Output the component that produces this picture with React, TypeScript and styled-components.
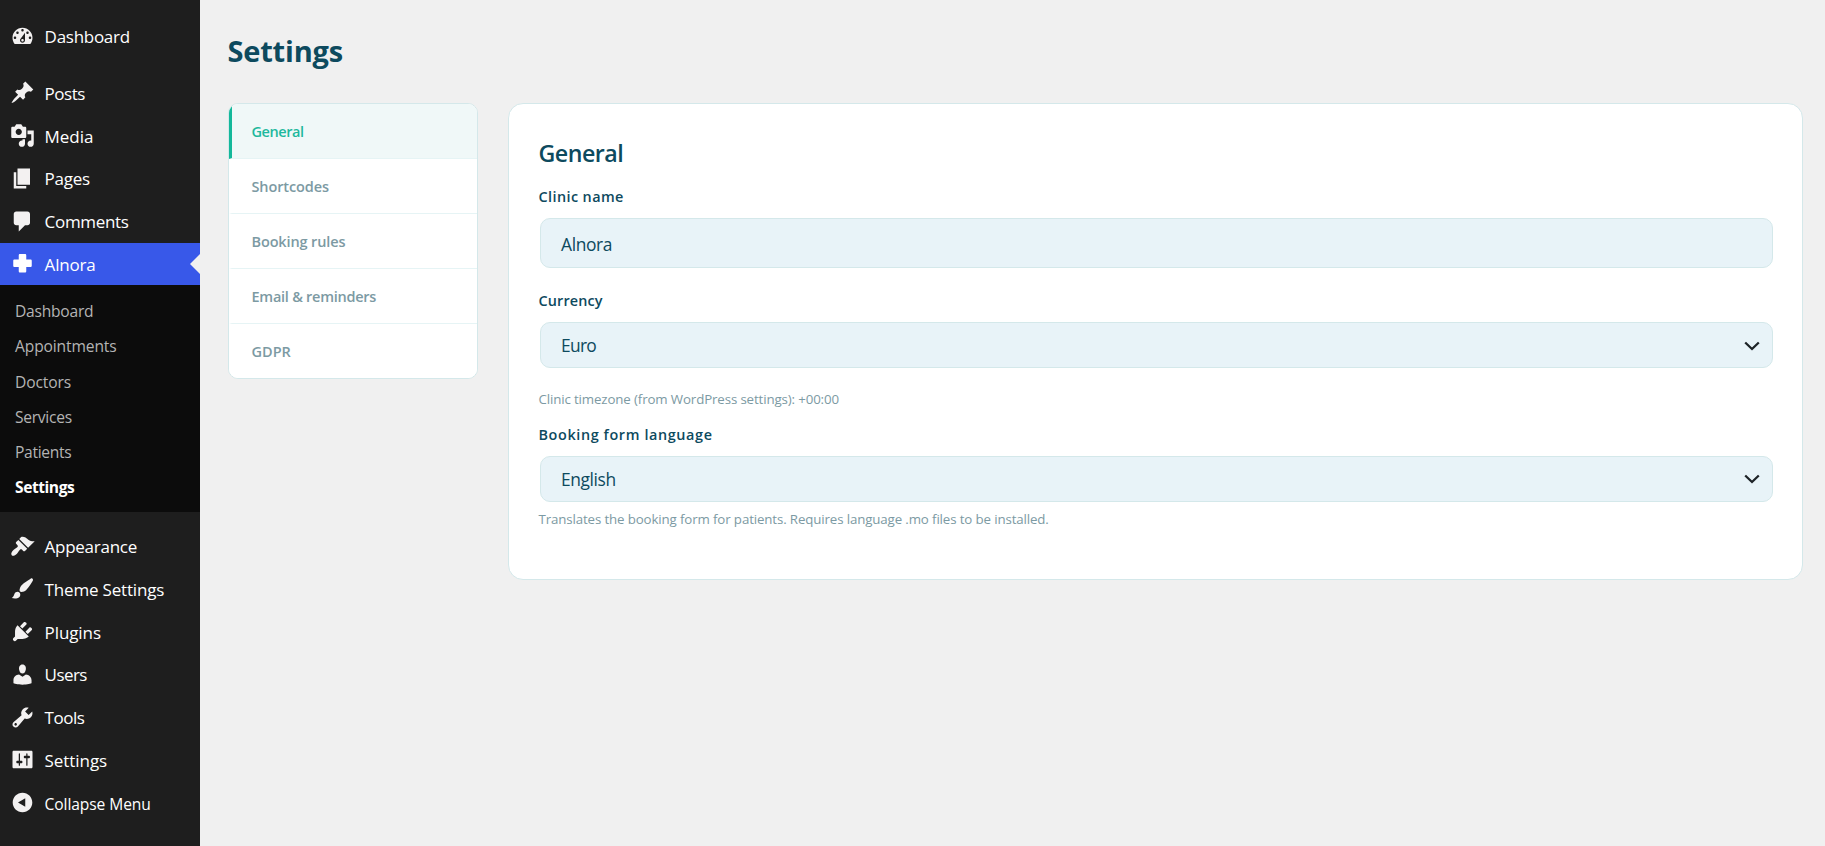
import React from 'react';
import styled, { createGlobalStyle, css } from 'styled-components';

const GlobalStyle = createGlobalStyle`
  *, *::before, *::after { box-sizing: border-box; }
  html, body { margin: 0; padding: 0; background: #f0f0f0; overflow: hidden; }
  body { font-family: "Segoe UI", "Open Sans", "Noto Sans", sans-serif; }
`;

const Shell = styled.div`
  display: flex;
  width: 100%;
  height: 846px;
`;

/* ---------- admin sidebar ---------- */

const Sidebar = styled.nav`
  flex: none;
  width: 200px;
  padding-top: 15px;
  background: #1e1e1e;
  overflow: hidden;
`;

const MenuGroup = styled.ul`
  list-style: none;
  margin: 0;
  padding: 0;

  & + & { margin-top: 13.75px; }
`;

const MenuLink = styled.a<{ $active?: boolean; $small?: boolean }>`
  position: relative;
  display: flex;
  align-items: center;
  gap: 9.6px;
  height: 42.75px;
  padding-left: 10px;
  color: #fff;
  font-size: ${(p) => (p.$small ? 15.6 : 17)}px;
  white-space: nowrap;

  ${(p) => p.$active && css`
    background: #3858e9;

    &::after {
      content: "";
      position: absolute;
      right: 0;
      top: 11px;
      border: 10px solid transparent;
      border-left-width: 0;
      border-right-color: #f0f0f0;
    }
  `}
`;

const MenuText = styled.span<{ $tracking: number }>`
  padding-top: 2px;
  line-height: 24px;
  letter-spacing: ${(p) => p.$tracking}px;
`;

const MenuIcon = styled.svg<{ $active?: boolean }>`
  flex: none;
  width: 25px;
  height: 25px;
  fill: ${(p) => (p.$active ? '#fff' : '#f3f1f1')};
`;

const SubMenu = styled.ul`
  list-style: none;
  margin: 0 0 12.9px;
  padding: 9px 0 6.6px;
  background: #0c0c0c;
`;

const SubLink = styled.li<{ $current?: boolean; $tracking: number }>`
  height: 35.2px;
  padding-left: 15px;
  color: ${(p) => (p.$current ? '#fff' : '#b4b4b4')};
  font-size: 15.6px;
  font-weight: ${(p) => (p.$current ? 700 : 400)};
  line-height: 35.2px;
  letter-spacing: ${(p) => p.$tracking}px;
`;

/* ---------- settings page ---------- */

const Page = styled.main`
  flex: 1;
  min-width: 0;
  padding: 30px 22px 0 28px;
`;

const PageTitle = styled.h1`
  height: 40px;
  margin: 0 0 33px -0.5px;
  color: #0d4a5e;
  font-size: 29px;
  font-weight: 700;
  line-height: 41px;
  letter-spacing: -0.2px;
`;

const Columns = styled.div`
  display: flex;
  align-items: flex-start;
  gap: 30px;
`;

const Tabs = styled.div`
  flex: none;
  width: 250px;
  border: 1px solid #d4e8ea;
  border-radius: 10px;
  background: #fff;
  overflow: hidden;
`;

const Tab = styled.div<{ $active?: boolean; $tracking: number }>`
  height: 55px;
  padding-left: 19.5px;
  border-left: 3px solid ${(p) => (p.$active ? '#14b89a' : 'transparent')};
  border-bottom: 1px solid #e6f4f5;
  background: ${(p) => (p.$active ? '#f0f8f8' : '#fff')};
  color: ${(p) => (p.$active ? '#1eb89d' : '#7c9aa3')};
  font-size: 14.5px;
  font-weight: 600;
  line-height: 56px;
  letter-spacing: ${(p) => p.$tracking}px;

  &:last-child {
    height: 54px;
    border-bottom: 0;
  }
`;

const Card = styled.section`
  flex: 1;
  min-width: 0;
  height: 477px;
  padding: 34px 28.5px 0 29.5px;
  border: 1px solid #d4e8ea;
  border-radius: 15px;
  background: #fff;
`;

const CardTitle = styled.h2`
  margin: 0 0 18.5px;
  color: #0d4a5e;
  font-size: 23.2px;
  font-weight: 600;
  line-height: 30px;
  letter-spacing: -0.5px;
`;

const Label = styled.div<{ $tracking: number }>`
  margin-bottom: 11.5px;
  color: #0d4a5e;
  font-size: 14.4px;
  font-weight: 600;
  line-height: 20px;
  letter-spacing: ${(p) => p.$tracking}px;
`;

const Control = styled.div<{ $height: number; $tracking: number; $input?: boolean }>`
  display: flex;
  align-items: center;
  justify-content: space-between;
  height: ${(p) => p.$height}px;
  margin: 0 0.5px 0 1.5px;
  padding: ${(p) => (p.$input ? 2 : 0)}px 12.5px 0 20px;
  border: 1px solid #d4e8ea;
  border-radius: 10px;
  background: #e8f3f8;
  color: #0d4a5e;
  font-size: 17.4px;
  line-height: 30px;
  letter-spacing: ${(p) => p.$tracking}px;
`;

const Chevron = styled.svg`
  width: 16px;
  height: 10px;
  margin-top: 1px;
  fill: none;
  stroke: #1d2327;
  stroke-width: 2.3;
`;

const Hint = styled.p`
  margin: 0;
  color: #7c9aa3;
  font-size: 13.3px;
  line-height: 20px;
  letter-spacing: -0.13px;
`;

const Field = styled.div`
  & + & { margin-top: 22.5px; }
  & + ${Hint} { margin-top: 21.2px; }
  ${Hint} + & { margin-top: 15.8px; }
  ${Hint} + & ${Label} { margin-bottom: 11px; }
  ${Control} + ${Hint} { margin-top: 7px; }
`;

const icons = {
  dashboard: 'M3.76 16h12.48c1.1-1.37 1.76-3.11 1.76-5 0-4.42-3.58-8-8-8s-8 3.58-8 8c0 1.89.66 3.63 1.76 5zM10 4c.55 0 1 .45 1 1s-.45 1-1 1-1-.45-1-1 .45-1 1-1zM6 6c.55 0 1 .45 1 1s-.45 1-1 1-1-.45-1-1 .45-1 1-1zm8 0c.55 0 1 .45 1 1s-.45 1-1 1-1-.45-1-1 .45-1 1-1zm-5.37 5.55L12 7v6c0 1.1-.9 2-2 2s-2-.9-2-2c0-.57.24-1.08.63-1.45zM4 10c.55 0 1 .45 1 1s-.45 1-1 1-1-.45-1-1 .45-1 1-1zm12 0c.55 0 1 .45 1 1s-.45 1-1 1-1-.45-1-1 .45-1 1-1zm-5 3c0-.55-.45-1-1-1s-1 .45-1 1 .45 1 1 1 1-.45 1-1z',
  posts: 'M10.44 3.02l1.82-1.82 6.36 6.35-1.83 1.82c-1.05-.68-2.48-.57-3.41.36l-.75.75c-.92.93-1.04 2.35-.35 3.41l-1.83 1.82-2.41-2.41-2.8 2.79c-.42.42-3.38 2.71-3.8 2.29s1.86-3.39 2.28-3.81l2.79-2.79L4.1 9.36l1.83-1.82c1.05.69 2.48.57 3.4-.36l.75-.75c.93-.92 1.05-2.35.36-3.41z',
  media: 'M13 11V4c0-.55-.45-1-1-1h-1.67L9 1H5L3.67 3H2c-.55 0-1 .45-1 1v7c0 .55.45 1 1 1h10c.55 0 1-.45 1-1zM7 4.5c1.38 0 2.5 1.12 2.5 2.5S8.38 9.5 7 9.5 4.5 8.38 4.5 7 5.62 4.5 7 4.5zM14 6h5v10.5c0 1.38-1.12 2.5-2.5 2.5S14 17.88 14 16.5s1.12-2.5 2.5-2.5c.17 0 .34.02.5.05V9h-3V6zm-4 8.05V13h2v3.5c0 1.38-1.12 2.5-2.5 2.5S7 17.88 7 16.5 8.12 14 9.5 14c.17 0 .34.02.5.05z',
  pages: 'M6 15V2h10v13H6zm-1 1h8v2H3V5h2v11z',
  comments: 'M5 2h9c1.1 0 2 .9 2 2v7c0 1.1-.9 2-2 2h-2l-5 5v-5H5c-1.1 0-2-.9-2-2V4c0-1.1.9-2 2-2z',
  plus: 'M8 2.4h4c.6 0 1 .4 1 1v3.4h3.4c.6 0 1 .4 1 1v4c0 .6-.4 1-1 1H13v3.4c0 .6-.4 1-1 1H8c-.6 0-1-.4-1-1v-3.4H3.6c-.6 0-1-.4-1-1v-4c0-.6.4-1 1-1H7V3.4c0-.6.4-1 1-1z',
  appearance: 'M14.48 11.06L7.41 3.99l1.5-1.5c.5-.56 2.3-.47 3.51.32 1.21.8 1.43 1.28 2.91 2.1 1.18.64 2.45 1.26 4.45.85zm-.71.71L6.7 4.7 4.93 6.47c-.39.39-.39 1.02 0 1.41l1.06 1.06c.39.39.39 1.03 0 1.42-.6.6-1.43 1.11-2.21 1.69-.35.26-.7.53-1.01.84C1.43 14.23.4 16.08 1.4 17.07c.99 1 2.84-.03 4.18-1.36.31-.31.58-.66.85-1.02.57-.78 1.08-1.61 1.69-2.21.39-.39 1.02-.39 1.41 0l1.06 1.06c.39.39 1.02.39 1.41 0z',
  brush: 'M18.33 3.57s.27-.8-.31-1.36c-.53-.52-1.22-.24-1.22-.24-.61.3-5.76 3.47-7.67 5.57-.86.96-2.06 3.79-1.09 4.82.92.98 3.96-.17 4.79-1 2.06-2.06 5.21-7.17 5.5-7.79zM1.4 17.65c2.37-1.56 1.46-3.41 3.23-4.64.93-.65 2.22-.62 3.08.29.63.67.8 2.57-.16 3.46-1.57 1.45-4 1.55-6.15.89z',
  plugins: 'M13.11 4.36L9.87 7.6 8 5.73l3.24-3.24c.35-.34 1.05-.2 1.56.32.52.51.66 1.21.31 1.55zm-8 1.77l.91-1.12 9.01 9.01-1.19.84c-.71.71-2.63 1.16-3.82 1.16H6.14L4.9 17.26c-.59.59-1.54.59-2.12 0-.59-.58-.59-1.53 0-2.12l1.24-1.24v-3.88c0-1.13.4-3.19 1.09-3.89zm7.26 3.97l3.24-3.24c.34-.35 1.04-.21 1.55.31.52.51.66 1.21.31 1.55l-3.24 3.25z',
  users: 'M10 9.25c-2.27 0-2.73-3.44-2.73-3.44C7 4.02 7.82 2 9.97 2c2.16 0 2.98 2.02 2.71 3.81 0 0-.41 3.44-2.68 3.44zm0 2.57L12.72 10c2.39 0 4.52 2.33 4.52 4.53v2.49s-3.65 1.13-7.24 1.13c-3.65 0-7.24-1.13-7.24-1.13v-2.49c0-2.25 1.94-4.48 4.47-4.48z',
  tools: 'M16.68 9.77c-1.34 1.34-3.3 1.67-4.95.99l-5.41 6.52c-.99.99-2.59.99-3.58 0s-.99-2.59 0-3.57l6.52-5.42c-.68-1.65-.35-3.61.99-4.95 1.28-1.28 3.12-1.62 4.72-1.06l-2.89 2.89 2.82 2.82 2.86-2.87c.53 1.58.18 3.39-1.08 4.65zM3.81 16.21c.4.39 1.04.39 1.43 0 .4-.4.4-1.04 0-1.43-.39-.4-1.03-.4-1.43 0-.39.39-.39 1.03 0 1.43z',
  settings: 'M18 16V4c0-.55-.45-1-1-1H3c-.55 0-1 .45-1 1v12c0 .55.45 1 1 1h14c.55 0 1-.45 1-1zM8 11h1c.55 0 1 .45 1 1s-.45 1-1 1H8v1.5c0 .28-.22.5-.5.5s-.5-.22-.5-.5V13H6c-.55 0-1-.45-1-1s.45-1 1-1h1V5.5c0-.28.22-.5.5-.5s.5.22.5.5V11zm5-2h-1c-.55 0-1-.45-1-1s.45-1 1-1h1V5.5c0-.28.22-.5.5-.5s.5.22.5.5V7h1c.55 0 1 .45 1 1s-.45 1-1 1h-1v5.5c0 .28-.22.5-.5.5s-.5-.22-.5-.5V9z',
  collapse: 'M10 2.16c4.33 0 7.84 3.51 7.84 7.84s-3.51 7.84-7.84 7.84S2.16 14.33 2.16 10 5.67 2.16 10 2.16zm2.2 11.3V6.54L6.4 10z',
};

type IconName = keyof typeof icons;
type Entry = { label: string; icon: IconName; tracking: number; active?: boolean; small?: boolean };

const Entries = ({ items }: { items: Entry[] }) => (
  <>
    {items.map((item) => (
      <li key={item.label}>
        <MenuLink $active={item.active} $small={item.small}>
          <MenuIcon viewBox="0 0 20 20" $active={item.active}>
            <path fillRule="evenodd" d={icons[item.icon]} />
          </MenuIcon>
          <MenuText $tracking={item.tracking}>{item.label}</MenuText>
        </MenuLink>
      </li>
    ))}
  </>
);

const overview: Entry[] = [{ label: 'Dashboard', icon: 'dashboard', tracking: -0.28 }];

const content: Entry[] = [
  { label: 'Posts', icon: 'posts', tracking: -0.48 },
  { label: 'Media', icon: 'media', tracking: -0.06 },
  { label: 'Pages', icon: 'pages', tracking: -0.29 },
  { label: 'Comments', icon: 'comments', tracking: -0.31 },
  { label: 'Alnora', icon: 'plus', tracking: -0.19, active: true },
];

const clinic = [
  { label: 'Dashboard', tracking: -0.24 },
  { label: 'Appointments', tracking: -0.13 },
  { label: 'Doctors', tracking: -0.13 },
  { label: 'Services', tracking: -0.28 },
  { label: 'Patients', tracking: -0.3 },
  { label: 'Settings', tracking: -0.45, current: true },
];

const system: Entry[] = [
  { label: 'Appearance', icon: 'appearance', tracking: -0.27 },
  { label: 'Theme Settings', icon: 'brush', tracking: -0.18 },
  { label: 'Plugins', icon: 'plugins', tracking: -0.1 },
  { label: 'Users', icon: 'users', tracking: -0.57 },
  { label: 'Tools', icon: 'tools', tracking: -0.5 },
  { label: 'Settings', icon: 'settings', tracking: -0.06 },
  { label: 'Collapse Menu', icon: 'collapse', tracking: -0.1, small: true },
];

const tabs = [
  { label: 'General', tracking: -0.42, active: true },
  { label: 'Shortcodes', tracking: -0.12 },
  { label: 'Booking rules', tracking: -0.13 },
  { label: 'Email & reminders', tracking: -0.26 },
  { label: 'GDPR', tracking: 0 },
];

const Arrow = () => (
  <Chevron viewBox="0 0 16 10">
    <path d="M1.2 1.5L8 8l6.8-6.5" />
  </Chevron>
);

export default function App() {
  return (
    <>
      <GlobalStyle />
      <Shell>
        <Sidebar>
          <MenuGroup>
            <Entries items={overview} />
          </MenuGroup>
          <MenuGroup>
            <Entries items={content} />
          </MenuGroup>
          <SubMenu>
            {clinic.map((item) => (
              <SubLink key={item.label} $current={item.current} $tracking={item.tracking}>
                {item.label}
              </SubLink>
            ))}
          </SubMenu>
          <MenuGroup>
            <Entries items={system} />
          </MenuGroup>
        </Sidebar>
        <Page>
          <PageTitle>Settings</PageTitle>
          <Columns>
            <Tabs>
              {tabs.map((tab) => (
                <Tab key={tab.label} $active={tab.active} $tracking={tab.tracking}>
                  {tab.label}
                </Tab>
              ))}
            </Tabs>
            <Card>
              <CardTitle>General</CardTitle>
              <Field>
                <Label $tracking={0.42}>Clinic name</Label>
                <Control $height={50} $tracking={-0.35} $input>Alnora</Control>
              </Field>
              <Field>
                <Label $tracking={0.15}>Currency</Label>
                <Control $height={46} $tracking={-0.7}>
                  Euro
                  <Arrow />
                </Control>
              </Field>
              <Hint>Clinic timezone (from WordPress settings): +00:00</Hint>
              <Field>
                <Label $tracking={0.62}>Booking form language</Label>
                <Control $height={46} $tracking={-0.4}>
                  English
                  <Arrow />
                </Control>
                <Hint>Translates the booking form for patients. Requires language .mo files to be installed.</Hint>
              </Field>
            </Card>
          </Columns>
        </Page>
      </Shell>
    </>
  );
}
